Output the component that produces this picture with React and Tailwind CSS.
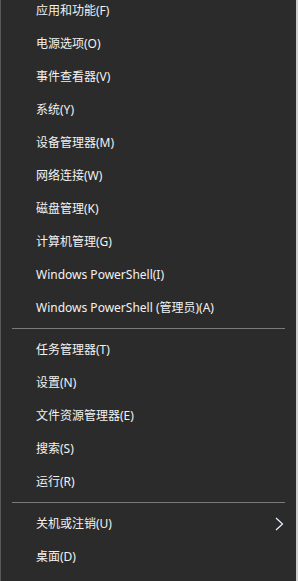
import React from 'react'

const group1 = [
  '应用和功能(F)',
  '电源选项(O)',
  '事件查看器(V)',
  '系统(Y)',
  '设备管理器(M)',
  '网络连接(W)',
  '磁盘管理(K)',
  '计算机管理(G)',
  'Windows PowerShell(I)',
  'Windows PowerShell (管理员)(A)',
]

const group2 = ['任务管理器(T)', '设置(N)', '文件资源管理器(E)', '搜索(S)', '运行(R)']

function Item({ label, arrow }) {
  return (
    <div className="h-[33px] flex items-center pl-[35px] pr-[12px] text-[12px] text-[#f2f2f2]">
      <span className="flex-1 whitespace-nowrap">{label}</span>
      {arrow && (
        <svg width="9" height="14" viewBox="0 0 9 14" className="mt-[1px]">
          <polyline points="1,1 7.5,7 1,13" fill="none" stroke="#e8f2ff" strokeWidth="1.2" />
        </svg>
      )}
    </div>
  )
}

function Sep() {
  return (
    <div className="h-[9px] flex items-center px-[11px]">
      <div className="h-px w-full bg-[#7a7a7a]" />
    </div>
  )
}

export default function App() {
  return (
    <div
      className="w-[298px] h-[581px] overflow-hidden bg-[#2b2b2b] border-l border-[#5a5a5a] flex"
      style={{ fontFamily: '"Noto Sans", "Noto Sans CJK SC", sans-serif' }}
    >
      <div className="flex-1 -mt-[6px]">
        {group1.map((l) => (
          <Item key={l} label={l} />
        ))}
        <Sep />
        {group2.map((l) => (
          <Item key={l} label={l} />
        ))}
        <Sep />
        <Item label="关机或注销(U)" arrow />
        <Item label="桌面(D)" />
      </div>
      <div className="w-[2px] bg-[#cfcfcf]" />
    </div>
  )
}
